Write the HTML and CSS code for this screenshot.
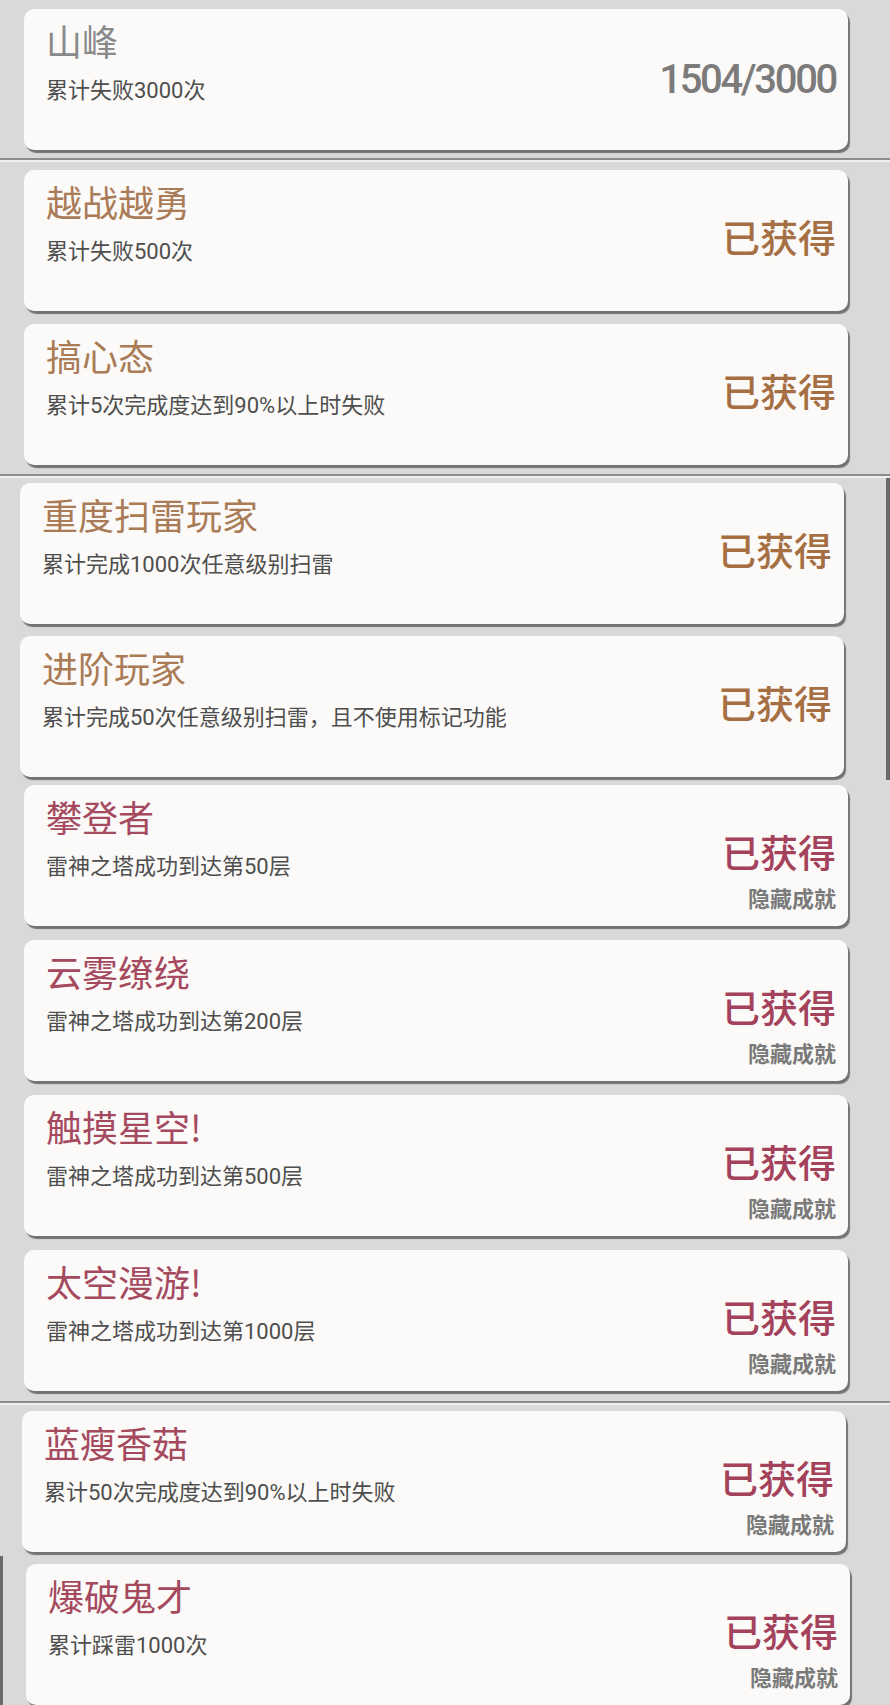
FILE: index.html
```html
<!DOCTYPE html>
<html lang="zh-CN">
<head>
<meta charset="utf-8">
<title>成就</title>
<link rel="stylesheet" href="styles.css">
</head>
<body>
<div class="band band-1">
  <div class="card">
    <div class="info">
      <div class="title t-gray">山峰</div>
      <div class="desc">累计失败3000次</div>
    </div>
    <div class="status">
      <div class="progress">1504/3000</div>
    </div>
  </div>
</div>
<div class="sep"></div>
<div class="band band-2">
  <div class="card">
    <div class="info">
      <div class="title t-brown">越战越勇</div>
      <div class="desc">累计失败500次</div>
    </div>
    <div class="status"><div class="got s-brown">已获得</div></div>
  </div>
  <div class="card">
    <div class="info">
      <div class="title t-brown">搞心态</div>
      <div class="desc">累计5次完成度达到90%以上时失败</div>
    </div>
    <div class="status"><div class="got s-brown">已获得</div></div>
  </div>
</div>
<div class="sep"></div>
<div class="band band-3">
  <div class="card">
    <div class="info">
      <div class="title t-brown">重度扫雷玩家</div>
      <div class="desc">累计完成1000次任意级别扫雷</div>
    </div>
    <div class="status"><div class="got s-brown">已获得</div></div>
  </div>
  <div class="card">
    <div class="info">
      <div class="title t-brown">进阶玩家</div>
      <div class="desc">累计完成50次任意级别扫雷，且不使用标记功能</div>
    </div>
    <div class="status"><div class="got s-brown">已获得</div></div>
  </div>
</div>
<div class="band band-4">
  <div class="card">
    <div class="info">
      <div class="title t-red">攀登者</div>
      <div class="desc">雷神之塔成功到达第50层</div>
    </div>
    <div class="status"><div class="got s-red">已获得</div><div class="hidden">隐藏成就</div></div>
  </div>
  <div class="card">
    <div class="info">
      <div class="title t-red">云雾缭绕</div>
      <div class="desc">雷神之塔成功到达第200层</div>
    </div>
    <div class="status"><div class="got s-red">已获得</div><div class="hidden">隐藏成就</div></div>
  </div>
  <div class="card">
    <div class="info">
      <div class="title t-red">触摸星空!</div>
      <div class="desc">雷神之塔成功到达第500层</div>
    </div>
    <div class="status"><div class="got s-red">已获得</div><div class="hidden">隐藏成就</div></div>
  </div>
  <div class="card">
    <div class="info">
      <div class="title t-red">太空漫游!</div>
      <div class="desc">雷神之塔成功到达第1000层</div>
    </div>
    <div class="status"><div class="got s-red">已获得</div><div class="hidden">隐藏成就</div></div>
  </div>
</div>
<div class="sep"></div>
<div class="band band-5">
  <div class="card">
    <div class="info">
      <div class="title t-red">蓝瘦香菇</div>
      <div class="desc">累计50次完成度达到90%以上时失败</div>
    </div>
    <div class="status"><div class="got s-red">已获得</div><div class="hidden">隐藏成就</div></div>
  </div>
</div>
<div class="band band-6">
  <div class="card">
    <div class="info">
      <div class="title t-red">爆破鬼才</div>
      <div class="desc">累计踩雷1000次</div>
    </div>
    <div class="status"><div class="got s-red">已获得</div><div class="hidden">隐藏成就</div></div>
  </div>
</div>
</body>
</html>
```

FILE: styles.css
```css
* { box-sizing: border-box; }

html, body {
  margin: 0;
  padding: 0;
}

body {
  width: 890px;
  height: 1705px;
  overflow: hidden;
  background: #d9d9d9;
  font-family: "Noto Sans CJK SC", "Noto Sans", sans-serif;
}

.band {
  display: flex;
  flex-direction: column;
  background: #d9d9d9;
}

.band-1 { padding: 9px 0 8px 24px; }
.band-2 { padding: 8px 0 9px 24px; gap: 13px; }
.band-3 { padding: 5px 0 3px 20px; gap: 12px; box-shadow: inset -4px 0 0 #6a6a6a; }
.band-4 { padding: 5px 0 10px 24px; gap: 14px; }
.band-5 { padding: 6px 0 4px 22px; }
.band-6 { padding: 8px 0 2px 26px; box-shadow: inset 3px 0 0 #6a6a6a; }

.sep {
  height: 4px;
  border-top: 2px solid #8c8c8c;
  background: #efefef;
}

.card {
  width: 824px;
  height: 141px;
  background: #fbfaf8;
  border-radius: 10px;
  box-shadow: 2px 3px 1px #737373;
  display: flex;
  justify-content: space-between;
  padding: 11px 12px 0 22px;
}

.info {
  display: flex;
  flex-direction: column;
}

.title {
  font-size: 36px;
  line-height: 40px;
  font-weight: 400;
}

.t-gray { color: #8a8a8a; }
.t-brown { color: #a97b56; }
.t-red { color: #a5495f; }

.desc {
  margin-top: 18px;
  font-family: Roboto, "Noto Sans CJK SC", sans-serif;
  font-size: 22px;
  line-height: 26px;
  color: #4e4e4e;
}

.status {
  display: flex;
  flex-direction: column;
  align-items: flex-end;
  padding-top: 33px;
}

.progress {
  padding-top: 5px;
  font-family: Roboto, "Noto Sans CJK SC", sans-serif;
  font-size: 40px;
  line-height: 44px;
  font-weight: 500;
  color: #7b7b7b;
  letter-spacing: -2.3px;
}

.got {
  font-size: 38px;
  line-height: 44px;
  font-weight: 500;
}

.s-brown { color: #a56f43; }
.s-red { color: #a4415b; }

.hidden {
  margin-top: 12px;
  font-size: 22px;
  line-height: 24px;
  font-weight: 700;
  color: #7a7a7a;
}
```
